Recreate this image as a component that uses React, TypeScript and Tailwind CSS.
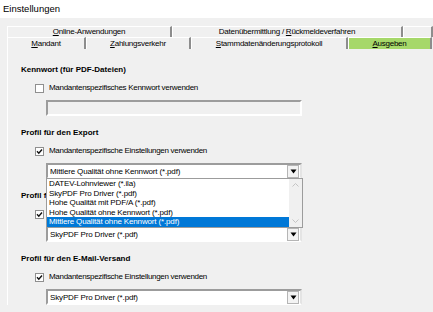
import type { ReactNode } from "react"

const font = { fontFamily: '"Liberation Sans", Arial, sans-serif' }

const Key = ({ k, rest }: { k: string; rest: string }) => (
  <span>
    <span className="underline underline-offset-1">{k}</span>
    {rest}
  </span>
)

function Tab({ children, w, active }: { children?: ReactNode; w: string; active?: boolean }) {
  return (
    <div
      className={`${w} flex h-full items-center justify-center border-l border-t border-white border-r-2 border-r-[#8d8d8d] tracking-[-0.25px] ${
        active ? "bg-[#a6d86a]" : "bg-[#f0f0f0]"
      }`}
    >
      {children}
    </div>
  )
}

function Checkbox({ checked }: { checked?: boolean }) {
  return (
    <div className="flex h-[9px] w-[9px] items-center justify-center border border-[#8f8f8f] bg-white">
      {checked && (
        <svg width="7" height="7" viewBox="0 0 7 7">
          <path d="M1 3.3 L2.8 5.2 L6 1.5" fill="none" stroke="#111" strokeWidth="1.4" />
        </svg>
      )}
    </div>
  )
}

function Arrow() {
  return (
    <div className="flex h-[13px] w-[12px] items-center justify-center border border-[#b5b5b5] bg-[#f3f3f3]">
      <svg width="7" height="5" viewBox="0 0 7 5">
        <path d="M0.5 0.5 H6.5 L3.5 4.5 Z" fill="#000" />
      </svg>
    </div>
  )
}

function Select({ value, children }: { value: string; children?: ReactNode }) {
  return (
    <div className="relative ml-[25px] flex h-[16px] w-[256px] items-center justify-between border-2 border-b-white border-l-[#9c9c9c] border-r-[#e4e4e4] border-t-[#9c9c9c] bg-white pl-[2px] pr-px">
      <span className="pt-px text-[8px] leading-[10px] tracking-[-0.15px]">{value}</span>
      <Arrow />
      {children}
    </div>
  )
}

const options = [
  "DATEV-Lohnviewer (*.ila)",
  "SkyPDF Pro Driver (*.pdf)",
  "Hohe Qualität mit PDF/A (*.pdf)",
  "Hohe Qualität ohne Kennwort (*.pdf)",
  "Mittlere Qualität ohne Kennwort (*.pdf)",
]

function DropList() {
  return (
    <div className="absolute left-[-2px] top-[13px] z-10 flex w-[257px] border border-[#9c9c9c] bg-white">
      <div className="flex flex-1 flex-col">
        {options.map((o, i) => (
          <div
            key={o}
            className={`h-[9.5px] pl-[2px] text-[8px] leading-[9.5px] tracking-[-0.15px] ${
              i === options.length - 1 ? "bg-[#0078d7] text-white" : "text-black"
            }`}
          >
            {o}
          </div>
        ))}
      </div>
      <div className="flex w-[13px] flex-col items-center justify-between bg-[#f0f0f0] py-[4px]">
        <svg width="7" height="4" viewBox="0 0 7 4">
          <path d="M0.5 3.5 L3.5 0.5 L6.5 3.5" fill="none" stroke="#c4c4c4" strokeWidth="1" />
        </svg>
        <svg width="7" height="4" viewBox="0 0 7 4">
          <path d="M0.5 0.5 L3.5 3.5 L6.5 0.5" fill="none" stroke="#c4c4c4" strokeWidth="1" />
        </svg>
      </div>
    </div>
  )
}

function Section({
  title,
  label,
  checked,
  children,
  first,
}: {
  title: string
  label: string
  checked?: boolean
  children: ReactNode
  first?: boolean
}) {
  return (
    <div className={`flex flex-col ${first ? "" : "mt-[12px]"}`}>
      <div className="h-[10px] text-[8px] font-bold leading-[10px]">{title}</div>
      <div className="ml-[14px] mt-[8px] flex h-[10px] items-center gap-[5px]">
        <Checkbox checked={checked} />
        <span className="text-[8px] leading-[10px] tracking-[-0.3px]">{label}</span>
      </div>
      <div className="mt-[7px]">{children}</div>
    </div>
  )
}

export default function App() {
  return (
    <div className="h-[312px] w-[433px] overflow-hidden bg-[#f0f0f0] text-black" style={font}>
      <div className="flex h-[18px] items-center bg-white pl-[3px] text-[9.5px]">Einstellungen</div>

      <div className="mt-[8px] flex flex-col pl-[7px] text-[8px]">
        <div className="flex h-[11px]">
          <Tab w="w-[165px]">
            <Key k="O" rest="nline-Anwendungen" />
          </Tab>
          <Tab w="w-[231px]">
            <span>
              Datenübermittlung / <span className="underline underline-offset-1">R</span>ückmeldeverfahren
            </span>
          </Tab>
          <Tab w="flex-1" />
        </div>
        <div className="flex h-[12px]">
          <Tab w="w-[79px]">
            <Key k="M" rest="andant" />
          </Tab>
          <Tab w="w-[105px]">
            <Key k="Z" rest="ahlungsverkehr" />
          </Tab>
          <Tab w="w-[157px]">
            <Key k="S" rest="tammdatenänderungsprotokoll" />
          </Tab>
          <Tab w="w-[84px]" active>
            <Key k="A" rest="usgeben" />
          </Tab>
        </div>
      </div>

      <div className="ml-[7px] flex flex-col border-l border-white pl-[13px] pt-[16px]">
        <Section first title="Kennwort (für PDF-Dateien)" label="Mandantenspezifisches Kennwort verwenden">
          <div className="ml-[25px] h-[16px] w-[256px] border-2 border-b-white border-l-[#9c9c9c] border-r-white border-t-[#9c9c9c] bg-[#f0f0f0]" />
        </Section>

        <Section title="Profil für den Export" label="Mandantenspezifische Einstellungen verwenden" checked>
          <Select value="Mittlere Qualität ohne Kennwort (*.pdf)">
            <DropList />
          </Select>
        </Section>

        <Section title="Profil für den Druck" label="Mandantenspezifische Einstellungen verwenden" checked>
          <Select value="SkyPDF Pro Driver (*.pdf)" />
        </Section>

        <Section title="Profil für den E-Mail-Versand" label="Mandantenspezifische Einstellungen verwenden" checked>
          <Select value="SkyPDF Pro Driver (*.pdf)" />
        </Section>
      </div>
    </div>
  )
}
